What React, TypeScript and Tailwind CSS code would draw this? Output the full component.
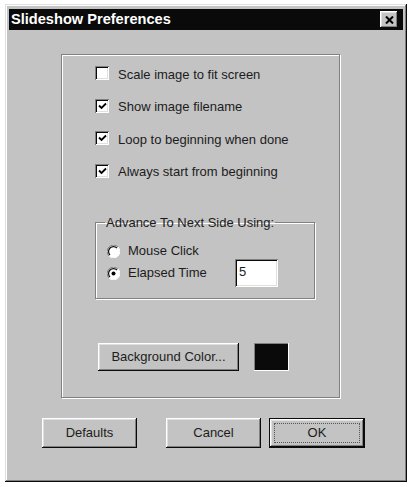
import React from "react";

const raised =
  "shadow-[inset_-1px_-1px_#0a0a0a,inset_1px_1px_#ffffff,inset_-2px_-2px_#808080,inset_2px_2px_#dfdfdf]";
const sunken =
  "shadow-[inset_1px_1px_#808080,inset_-1px_-1px_#ffffff,inset_2px_2px_#0a0a0a,inset_-2px_-2px_#dfdfdf]";

const CHECKS = [
  { label: "Scale image to fit screen", checked: false },
  { label: "Show image filename", checked: true },
  { label: "Loop to beginning when done", checked: true },
  { label: "Always start from beginning", checked: true },
];

function Checkbox({ checked }: { checked: boolean }) {
  return (
    <div className={`flex h-[14px] w-[14px] shrink-0 items-center justify-center bg-white ${sunken}`}>
      {checked && (
        <svg width="9" height="8" viewBox="0 0 9 8">
          <path d="M1 3.5 L3.5 6 L8 1.5" fill="none" stroke="#000" strokeWidth="1.8" />
        </svg>
      )}
    </div>
  );
}

function Radio({ checked }: { checked: boolean }) {
  return (
    <svg width="13" height="13" viewBox="0 0 13 13" className="shrink-0">
      <circle cx="6.5" cy="6.5" r="6" fill="#ffffff" />
      <path d="M11 2 A6 6 0 0 0 2 11" fill="none" stroke="#808080" strokeWidth="1" />
      <path d="M10 3 A4.8 4.8 0 0 0 3 10" fill="none" stroke="#0a0a0a" strokeWidth="1.2" />
      <path d="M2 11 A6 6 0 0 0 11 2" fill="none" stroke="#ffffff" strokeWidth="1" />
      {checked && <circle cx="6.5" cy="6.5" r="2" fill="#000" />}
    </svg>
  );
}

function Button({ label, isDefault = false, className = "" }: { label: string; isDefault?: boolean; className?: string }) {
  if (isDefault) {
    return (
      <div className={`h-[30px] w-[96px] border border-[#0a0a0a] bg-[#c3c3c3] ${className}`}>
        <div className={`flex h-full w-full items-center justify-center p-[4px] ${raised}`}>
          <div className="flex h-full w-full items-center justify-center border border-dotted border-[#555]">
            {label}
          </div>
        </div>
      </div>
    );
  }
  return (
    <div className={`flex h-[30px] w-[95px] items-center justify-center bg-[#c3c3c3] ${raised} ${className}`}>
      {label}
    </div>
  );
}

export default function App() {
  return (
    <div className="h-[487px] w-[410px] bg-white pl-[5px] pt-[4px] font-['Liberation_Sans',Arial,sans-serif] text-[13px] text-[#1c1c1c]">
      <div
        className={`flex h-[478px] w-[402px] flex-col bg-[#c3c3c3] px-[4px] pt-[5px] shadow-[inset_-1px_-1px_#0a0a0a,inset_1px_1px_#dfdfdf,inset_-2px_-2px_#808080,inset_2px_2px_#ffffff]`}
      >
        <div className="flex h-[21px] items-center justify-between bg-[#0a0a0a] pl-[2px] pr-[5px]">
          <span className="text-[14.6px] font-bold text-white">Slideshow Preferences</span>
          <div className={`flex h-[17px] w-[18px] items-center justify-center bg-[#c3c3c3] ${raised}`}>
            <svg width="9" height="8" viewBox="0 0 9 8">
              <path d="M1 0.5 L8 7.5 M8 0.5 L1 7.5" stroke="#000" strokeWidth="2" />
            </svg>
          </div>
        </div>

        <div className="ml-[52px] mt-[24px] h-[344px] w-[279px] border border-[#808080] shadow-[1px_1px_0_#ffffff,inset_1px_1px_0_#ffffff]">
          <div className="flex flex-col pl-[33px] pt-[2px]">
            {CHECKS.map((c) => (
              <div key={c.label} className="flex h-[32.5px] items-center gap-[9px]">
                <Checkbox checked={c.checked} />
                <span className="pt-[2px]">{c.label}</span>
              </div>
            ))}
          </div>

          <fieldset className="ml-[33px] mt-[28px] h-[84px] w-[220px] border border-[#808080] px-[11px] shadow-[1px_1px_0_#ffffff,inset_1px_1px_0_#ffffff]">
            <legend className="ml-[-2px] px-[1px] leading-[15px]">Advance To Next Side Using:</legend>
            <div className="box-content flex h-[22px] items-center gap-[8px] pt-[10px]">
              <Radio checked={false} />
              <span>Mouse Click</span>
            </div>
            <div className="flex h-[22px] items-center">
              <div className="flex w-[128px] items-center gap-[8px]">
                <Radio checked={true} />
                <span>Elapsed Time</span>
              </div>
              <div className={`h-[28px] w-[43px] shrink-0 bg-white pl-[4px] pt-[3px] ${sunken}`}>5</div>
            </div>
          </fieldset>

          <div className="ml-[36px] mt-[44px] flex items-center gap-[15px]">
            <div className={`flex h-[28px] w-[141px] items-center justify-center bg-[#c3c3c3] ${raised}`}>
              Background Color...
            </div>
            <div className="h-[28px] w-[35px] bg-[#0a0a0a] shadow-[inset_-1px_-1px_#ffffff,inset_1px_1px_#808080]" />
          </div>
        </div>

        <div className="mt-[20px] flex items-center">
          <Button label="Defaults" className="ml-[33px]" />
          <Button label="Cancel" className="ml-[29px]" />
          <Button label="OK" isDefault className="ml-[8px]" />
        </div>
      </div>
    </div>
  );
}
